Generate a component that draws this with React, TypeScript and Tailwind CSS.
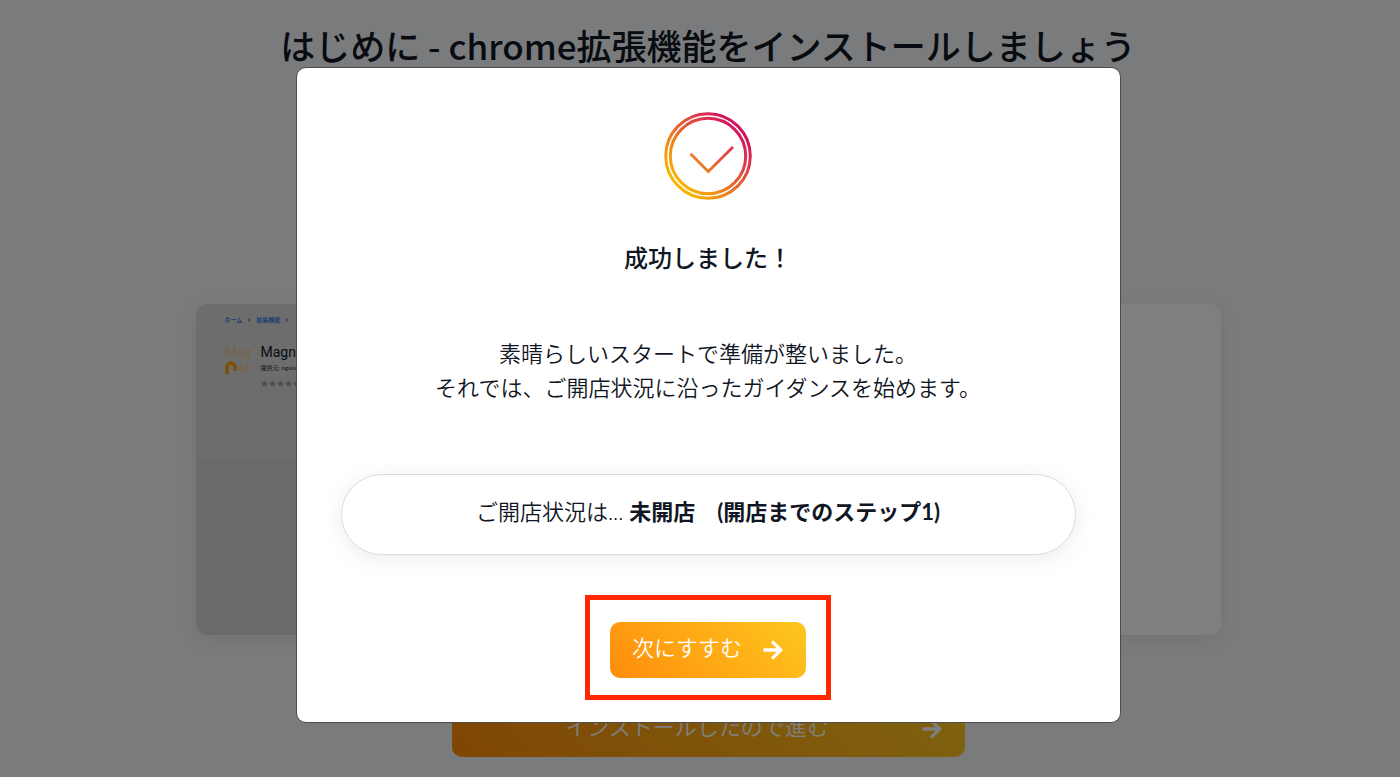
import type { ReactNode } from 'react';
import { FaArrowRight, FaChevronRight, FaStar } from 'react-icons/fa';

interface ArrowButtonProps {
    children: ReactNode;
    wide?: boolean;
}

const ArrowButton = ({ children, wide }: ArrowButtonProps) => (
    <button
        type="button"
        className={`flex h-14 items-center rounded-[10px] bg-linear-45 from-[#ff8c0c] to-[#fdc71e] px-[22px] text-[22px] font-[350] text-white ${wide ? 'w-full max-w-[513px]' : 'gap-5'}`}
    >
        <span className="flex-1 pb-1 leading-8">{children}</span>
        <FaArrowRight className="size-[22px]" aria-hidden="true" />
    </button>
);

const SuccessIcon = () => (
    <svg className="size-[88px]" viewBox="0 0 88 88" fill="none" stroke="url(#successGradient)" aria-hidden="true">
        <defs>
            <linearGradient id="successGradient" gradientUnits="userSpaceOnUse" x1="16" y1="72" x2="72" y2="16">
                <stop offset="0" stopColor="#f8b500" />
                <stop offset="1" stopColor="#d4145f" />
            </linearGradient>
        </defs>
        <circle cx="44" cy="44" r="42.3" strokeWidth="3" />
        <circle cx="44" cy="44" r="37.7" strokeWidth="3" />
        <path d="M26.5 41.8 L44.3 59.6 L69 35" strokeWidth="2.8" />
    </svg>
);

const MagnetLogo = () => (
    <div className="relative w-7 self-start text-[14px] leading-[15px] text-[#efc48a]">
        <div>Mag</div>
        <div className="pl-[14px]">et</div>
        <svg className="absolute bottom-0 left-0 h-[13px] w-3" viewBox="0 0 12 13" fill="none" aria-hidden="true">
            <path d="M2 13V6a4 4 0 0 1 8 0v4" stroke="#ff9d00" strokeWidth="3.4" />
        </svg>
    </div>
);

const StorePreview = () => (
    <div className="w-1/2 bg-[#d5d5d5]">
        <div className="h-[155px] bg-[#dbdbdb] pt-3 pl-[29px]">
            <nav className="flex items-center gap-[5px] text-[6px] leading-2 font-bold text-[#3f7fe0]">
                <a href="#home">ホーム</a>
                <FaChevronRight className="size-1 text-gray-600" />
                <a href="#extensions">拡張機能</a>
                <FaChevronRight className="size-1 text-gray-600" />
            </nav>
            <div className="mt-5 flex gap-2 border-b border-[#d2d2d2] pb-4">
                <MagnetLogo />
                <div>
                    <h3 className="font-[Roboto] text-[14px] leading-4 text-gray-900">Magnet</h3>
                    <p className="mt-1 text-[6px] leading-2 font-medium text-gray-700">提供元: ogaland</p>
                    <div className="mt-2 flex gap-px text-[7px] text-gray-400">
                        {[1, 2, 3, 4, 5].map((n) => (
                            <FaStar key={n} />
                        ))}
                    </div>
                </div>
            </div>
        </div>
    </div>
);

const SuccessDialog = () => (
    <div
        role="dialog"
        aria-modal="true"
        aria-labelledby="dialog-title"
        className="flex w-full max-w-[825px] flex-col items-center rounded-[10px] border border-[#4b4c4e] bg-white px-11 pt-11 pb-[22px] text-center"
    >
        <SuccessIcon />
        <h2 id="dialog-title" className="mt-[42px] text-2xl font-medium">
            成功しました！
        </h2>
        <p className="mt-[63px] text-[22px] leading-[34px] font-[350]">
            素晴らしいスタートで準備が整いました。
            <br />
            それでは、ご開店状況に沿ったガイダンスを始めます。
        </p>
        <div className="mt-[69px] w-full rounded-full border border-[#d5dae5] pt-[21px] pb-[26px] text-[22px] leading-8 font-[350] shadow-[0_4px_20px_rgba(60,80,80,0.1)]">
            ご開店状況は... <strong className="font-bold">未開店　(開店までのステップ1)</strong>
        </div>
        <div className="mt-10 border-5 border-[#ff2600] px-5 pt-[22px] pb-[17px]">
            <ArrowButton>次にすすむ</ArrowButton>
        </div>
    </div>
);

export default function App() {
    return (
        <div className="relative min-h-screen bg-[#f4f6f9] font-[Lato,'Noto_Sans_CJK_JP',sans-serif] text-[#101623]">
            <main className="flex flex-col items-center pt-5 pb-5 pl-4">
                <h1 className="font-['Noto_Sans_CJK_JP',sans-serif] text-[35px] leading-[50px] font-medium">
                    はじめに - chrome拡張機能をインストールしましょう
                </h1>
                <section className="mt-[234px] flex h-[331px] w-full max-w-[1025px] overflow-hidden rounded-xl bg-white shadow-[0_4px_20px_rgba(60,80,80,0.1)]">
                    <StorePreview />
                </section>
                <div className="mt-[66px] flex w-full justify-center">
                    <ArrowButton wide>インストールしたので進む</ArrowButton>
                </div>
            </main>
            <div className="absolute inset-0 flex items-start justify-center bg-black/50 pt-[67px] pl-4">
                <SuccessDialog />
            </div>
        </div>
    );
}
